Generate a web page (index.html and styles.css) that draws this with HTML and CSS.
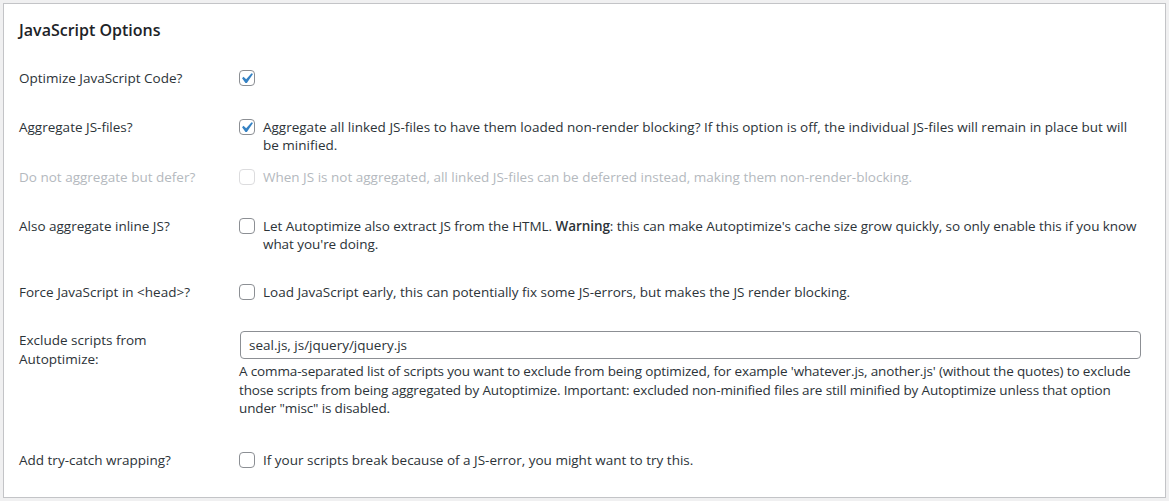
FILE: index.html
```html
<!DOCTYPE html>
<html lang="en">
<head>
<meta charset="utf-8">
<title>JavaScript Options</title>
<link rel="stylesheet" href="styles.css">
</head>
<body>
<div class="panel">
  <h2 class="title">JavaScript Options</h2>
  <div class="rows">
    <div class="row r-first">
      <div class="label">Optimize JavaScript Code?</div>
      <div class="field">
        <div class="check">
          <span class="box checked"><svg viewBox="0 0 20 20" width="21" height="21"><path d="M14.83 4.89l1.34.94-5.81 8.38H9.02L5.78 9.67l1.34-1.25 2.57 2.4z"/></svg></span>
        </div>
      </div>
    </div>
    <div class="row r-agg">
      <div class="label">Aggregate JS-files?</div>
      <div class="field">
        <div class="check">
          <span class="box checked"><svg viewBox="0 0 20 20" width="21" height="21"><path d="M14.83 4.89l1.34.94-5.81 8.38H9.02L5.78 9.67l1.34-1.25 2.57 2.4z"/></svg></span>
          <span class="text">Aggregate all linked JS-files to have them loaded non-render blocking? If this option is off, the individual JS-files will remain in place but will be minified.</span>
        </div>
      </div>
    </div>
    <div class="row r-defer disabled">
      <div class="label">Do not aggregate but defer?</div>
      <div class="field">
        <div class="check">
          <span class="box"></span>
          <span class="text">When JS is not aggregated, all linked JS-files can be deferred instead, making them non-render-blocking.</span>
        </div>
      </div>
    </div>
    <div class="row">
      <div class="label">Also aggregate inline JS?</div>
      <div class="field">
        <div class="check">
          <span class="box"></span>
          <span class="text tight">Let Autoptimize also extract JS from the HTML. <strong>Warning</strong>: this can make Autoptimize's cache size grow quickly, so only enable this if you know what you're doing.</span>
        </div>
      </div>
    </div>
    <div class="row">
      <div class="label">Force JavaScript in &lt;head&gt;?</div>
      <div class="field">
        <div class="check">
          <span class="box"></span>
          <span class="text">Load JavaScript early, this can potentially fix some JS-errors, but makes the JS render blocking.</span>
        </div>
      </div>
    </div>
    <div class="row r-exclude">
      <div class="label">Exclude scripts from<br>Autoptimize:</div>
      <div class="field">
        <div class="input">seal.js, js/jquery/jquery.js</div>
        <p class="description">A comma-separated list of scripts you want to exclude from being optimized, for example 'whatever.js, another.js' (without the quotes) to exclude those scripts from being aggregated by Autoptimize. Important: excluded non-minified files are still minified by Autoptimize unless that option under "misc" is disabled.</p>
      </div>
    </div>
    <div class="row">
      <div class="label">Add try-catch wrapping?</div>
      <div class="field">
        <div class="check">
          <span class="box"></span>
          <span class="text">If your scripts break because of a JS-error, you might want to try this.</span>
        </div>
      </div>
    </div>
  </div>
</div>
</body>
</html>
```

FILE: styles.css
```css
html, body {
  margin: 0;
  padding: 0;
  background: #f0f0f1;
}

body {
  font-family: "Open Sans", "Noto Sans", sans-serif;
  font-size: 13.5px;
  line-height: 18.2px;
  color: #2c3338;
}

.panel {
  margin: 3px;
  background: #fff;
  border: 1px solid #c3c4c7;
  padding: 0 24px 13px 15px;
}

.title {
  margin: 15px 0 13px;
  font-size: 16px;
  line-height: 22px;
  font-weight: 600;
  color: #1d2327;
}

.rows {
  display: flex;
  flex-direction: column;
}

.row {
  display: flex;
  padding: 15px 0;
}

.r-first { padding-bottom: 16px; }
.r-agg { padding-bottom: 13px; }
.r-defer { padding-top: 0; padding-bottom: 16px; }
.r-exclude { padding-bottom: 19px; }

.label {
  width: 200px;
  flex: none;
  padding-right: 20px;
}

.field {
  flex: 1;
  min-width: 0;
}

.check {
  display: flex;
  align-items: flex-start;
  gap: 8px;
}

.box {
  position: relative;
  flex: none;
  width: 16px;
  height: 16px;
  box-sizing: border-box;
  border: 1px solid #8c8f94;
  border-radius: 4px;
  background: #fff;
  margin-top: 1px;
}

.box svg {
  position: absolute;
  left: -4px;
  top: -3px;
  fill: #3582c4;
}

.text strong {
  font-weight: 600;
}

.tight {
  letter-spacing: -0.06px;
}

.disabled .label,
.disabled .text {
  color: #b4b9be;
}

.disabled .box {
  border-color: #dcdcde;
}

.input {
  height: 28px;
  box-sizing: border-box;
  border: 1px solid #8c8f94;
  border-radius: 4px;
  padding: 0 8px;
  line-height: 26px;
  margin-left: 1px;
  color: #2c3338;
}

.description {
  margin: 3px 0 0;
  letter-spacing: -0.14px;
}
```
